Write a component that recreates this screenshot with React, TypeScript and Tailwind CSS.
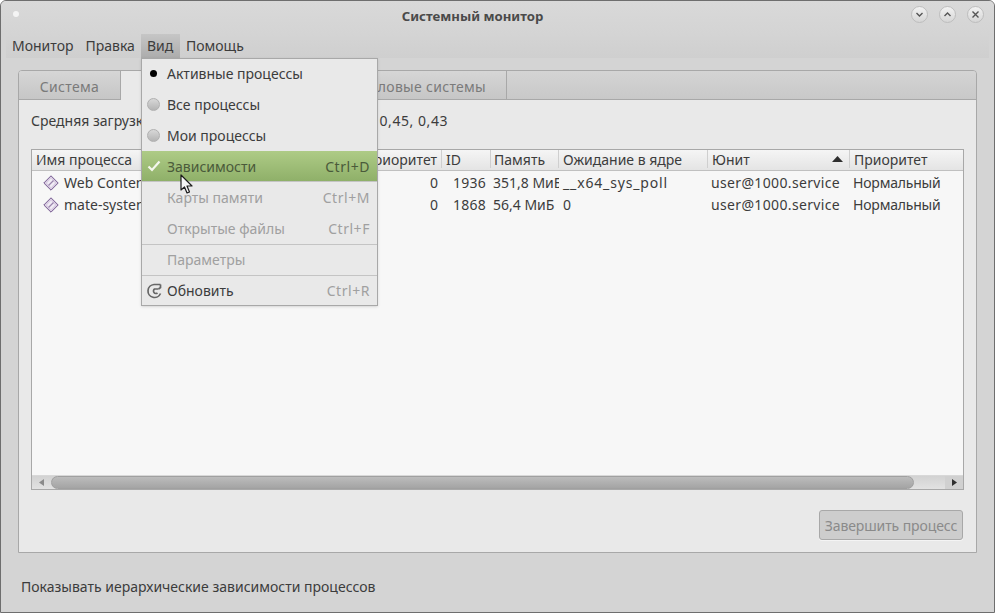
import React from "react";

const font = { fontFamily: '"Noto Sans", "Open Sans", sans-serif' };

function ProcIcon() {
  return (
    <svg width="16" height="16" viewBox="0 0 16 16" className="shrink-0">
      <path d="M8 0.8 L15.2 8 L8 15.2 L0.8 8 Z" fill="#d9cde2" stroke="#75598f" strokeWidth="1" />
      <path d="M4 8 L8 3.5 L12 8 L8 12.5 Z" fill="#f1ecf5" />
      <path d="M5.5 10.5 L10.5 5.5" stroke="#9a85ad" strokeWidth="1.3" />
    </svg>
  );
}

function WinButton({ kind }: { kind: "min" | "max" | "close" }) {
  return (
    <div className="w-[17px] h-[17px] rounded-full border border-[#bdbdbd] bg-gradient-to-b from-[#f2f2f2] to-[#d6d6d6] flex items-center justify-center">
      <svg width="9" height="9" viewBox="0 0 9 9" fill="none" stroke="#555" strokeWidth="1.4">
        {kind === "min" && <path d="M1.5 3 L4.5 6 L7.5 3" />}
        {kind === "max" && <path d="M1.5 6 L4.5 3 L7.5 6" />}
        {kind === "close" && <path d="M1.5 1.5 L7.5 7.5 M7.5 1.5 L1.5 7.5" />}
      </svg>
    </div>
  );
}

function Tab({ label, active, w }: { label: string; active?: boolean; w: string }) {
  return (
    <div
      className={`${w} h-full pt-[2px] flex items-center justify-center border-r border-[#a8a8a8] tracking-[0.3px] ${
        active ? "bg-[#e9e9e9] text-[#3c3c3c]" : "bg-gradient-to-b from-[#d6d6d6] to-[#c6c6c6] text-[#7a7a7a] border-b"
      }`}
    >
      {label}
    </div>
  );
}

const headers = [
  { label: "Имя процесса", w: "w-[329px]", pl: "pl-[4px]" },
  { label: "Приоритет", w: "w-[81px]", right: true, pl: "pl-[4px]" },
  { label: "ID", w: "w-[49px]", pl: "pl-[4px]" },
  { label: "Память", w: "w-[68px]", pl: "pl-[3px]" },
  { label: "Ожидание в ядре", w: "w-[149px]", pl: "pl-[4px]" },
  { label: "Юнит", w: "w-[142px]", sort: true, pl: "pl-[4px]" },
  { label: "Приоритет", w: "flex-1", pl: "pl-[4px]" },
];

const rows = [
  { name: "Web Content", nice: "0", id: "1936", mem: "351,8 МиБ", wait: "__x64_sys_poll", waitCls: "tracking-[0.85px]" },
  { name: "mate-system-monitor", nice: "0", id: "1868", mem: "56,4 МиБ", wait: "0", waitCls: "" },
];

function TableRow({ r }: { r: (typeof rows)[number] }) {
  return (
    <div className="h-[22px] pb-[1px] flex items-center text-[#3c3c3c] whitespace-nowrap">
      <div className="w-[329px] pl-[11px] flex items-center gap-[5px] overflow-hidden">
        <ProcIcon />
        <span>{r.name}</span>
      </div>
      <div className="w-[77px] text-right">{r.nice}</div>
      <div className="w-[48px] text-right tracking-[0.25px]">{r.id}</div>
      <div className="w-[73px] pl-[7px] overflow-hidden">{r.mem}</div>
      <div className={`w-[149px] pl-[4px] ${r.waitCls}`}>{r.wait}</div>
      <div className="w-[142px] pl-[3px] tracking-[0.35px]">user@1000.service</div>
      <div className="flex-1 pl-[3px] tracking-[-0.2px]">Нормальный</div>
    </div>
  );
}

function MenuItem({
  label,
  accel,
  mark,
  disabled,
  active,
  sep,
  h = "h-[31px]",
}: {
  label: string;
  accel?: string;
  mark?: React.ReactNode;
  disabled?: boolean;
  active?: boolean;
  sep?: boolean;
  h?: string;
}) {
  return (
    <div
      className={`${h} flex items-center pr-[7px] ${sep ? "border-t border-[#c4c4c4]" : ""} ${
        active ? "bg-gradient-to-b from-[#aecb86] to-[#8fb069] text-[#4a5a3a] border-b border-[#c4c4c4]" : ""
      } ${disabled ? "text-[#a0a0a0]" : active ? "" : "text-[#3c3c3c]"}`}
    >
      <div className="w-[23px] mr-[2px] flex justify-center shrink-0">{mark}</div>
      <span className="flex-1">{label}</span>
      {accel && (
        <span className={`tracking-[0.55px] ${active ? "text-[#4a5a3a]" : "text-[#a0a0a0]"}`}>{accel}</span>
      )}
    </div>
  );
}

const Radio = () => (
  <div className="w-[13px] h-[13px] rounded-full border border-[#b0b0b0] bg-gradient-to-b from-[#d8d8d8] to-[#b4b4b4]" />
);

export default function App() {
  return (
    <div
      style={font}
      className="relative w-[995px] h-[613px] overflow-hidden bg-[#d4d4d4] border border-[#6e6e6e] rounded-t-[6px] text-[14px] text-[#3c3c3c] flex flex-col"
    >
      {/* заголовок окна */}
      <div className="h-[33px] shrink-0 relative flex items-center justify-center pr-[50px] pb-[1px] bg-gradient-to-b from-[#d9d9d9] to-[#d4d4d4]">
        <div className="absolute left-[12px] top-[10px] w-[6px] h-[6px] rounded-full bg-[#f4f4f4]" />
        <span className="font-bold text-[13.2px] text-[#4a4a4a]">Системный монитор</span>
        <div className="absolute right-[10px] top-[5px] flex gap-[11px]">
          <WinButton kind="min" />
          <WinButton kind="max" />
          <WinButton kind="close" />
        </div>
      </div>

      {/* меню */}
      <div className="h-[24px] shrink-0 mx-[5px] flex items-stretch bg-gradient-to-b from-[#d4d4d4] to-[#cfcfcf]">
        <div className="px-[6px] pb-[2px] flex items-center">Монитор</div>
        <div className="px-[6px] pb-[2px] flex items-center">Правка</div>
        <div className="px-[6px] pb-[2px] w-[39px] flex items-center bg-gradient-to-b from-[#c6c6c6] to-[#acacac]">Вид</div>
        <div className="px-[6px] pb-[2px] flex items-center">Помощь</div>
      </div>

      {/* вкладки и содержимое */}
      <div className="mt-[12px] mx-[17px] h-[483px] shrink-0 flex flex-col border border-[#a8a8a8] rounded-t-[4px] overflow-hidden">
        <div className="h-[29px] shrink-0 flex bg-gradient-to-b from-[#d4d4d4] to-[#c8c8c8]">
          <Tab label="Система" w="w-[102px]" />
          <Tab label="Процессы" w="w-[110px]" active />
          <Tab label="Ресурсы" w="w-[92px]" />
          <Tab label="Файловые системы" w="w-[184px] pl-[6px]" />
          <div className="flex-1 border-b border-[#a8a8a8]" />
        </div>
        <div className="flex-1 min-h-0 bg-[#e9e9e9] px-[12px] flex flex-col">
          <div className="h-[41px] shrink-0 flex items-center whitespace-nowrap">
            Средняя загрузка за последние 1, 5, 15 минут:
            <span className="ml-[-4px] tracking-[0.55px]">0,45, 0,45, 0,43</span>
          </div>
          <div className="mt-[8px] h-[341px] shrink-0 flex flex-col border border-[#a8a8a8] bg-[#f7f7f7]">
            <div className="h-[21px] shrink-0 pb-[2px] flex bg-gradient-to-b from-[#f5f5f5] to-[#e4e4e4] border-b border-[#c0c0c0] whitespace-nowrap">
              {headers.map((h, i) => (
                <div
                  key={i}
                  className={`${h.w} ${h.pl} pr-[4px] flex items-center border-r border-[#cfcfcf] last:border-r-0 ${
                    h.right ? "justify-end" : "justify-between"
                  }`}
                >
                  <span>{h.label}</span>
                  {h.sort && (
                    <svg width="11" height="6" viewBox="0 0 11 6" className="mr-[2px]">
                      <path d="M0 6 L5.5 0 L11 6 Z" fill="#2f2f2f" />
                    </svg>
                  )}
                </div>
              ))}
            </div>
            <div className="flex-1 min-h-0 pt-[1px]">
              {rows.map((r) => (
                <TableRow key={r.id} r={r} />
              ))}
            </div>
            <div className="h-[14px] shrink-0 flex items-center bg-gradient-to-b from-[#d2d2d2] to-[#e2e2e2] border-t border-[#d8d8d8]">
              <div className="w-[19px] flex justify-center">
                <svg width="5" height="7" viewBox="0 0 5 7">
                  <path d="M5 0 L0 3.5 L5 7 Z" fill="#8a8a8a" />
                </svg>
              </div>
              <div className="w-[863px] h-[13px] rounded-full border border-[#a0a0a0] bg-gradient-to-b from-[#bcbcbc] to-[#a4a4a4]" />
              <div className="flex-1" />
              <div className="w-[18px] h-full flex items-center justify-center bg-[#d0d0d0]">
                <svg width="5" height="7" viewBox="0 0 5 7">
                  <path d="M0 0 L5 3.5 L0 7 Z" fill="#2f2f2f" />
                </svg>
              </div>
            </div>
          </div>
          <div className="mt-[20px] flex justify-end">
            <div className="w-[144px] h-[30px] mr-[1px] flex items-center justify-center rounded-[3px] border border-[#a8a8a8] bg-[#cdcdcd] text-[#8a8a8a] whitespace-nowrap tracking-[-0.1px] shadow-[0_1px_0_#f4f4f4]">
              Завершить процесс
            </div>
          </div>
        </div>
      </div>

      {/* строка состояния */}
      <div className="flex-1 flex items-center pl-[20px] pt-[8px]">Показывать иерархические зависимости процессов</div>

      {/* раскрытое меню "Вид" */}
      <div className="absolute left-[140px] top-[57px] w-[237px] border border-[#a8a8a8] bg-[#e9e9e9] shadow-sm">
        <MenuItem h="h-[30px] pb-[1px]" label="Активные процессы" mark={<div className="w-[7px] h-[7px] rounded-full bg-black" />} />
        <MenuItem label="Все процессы" mark={<Radio />} />
        <MenuItem label="Мои процессы" mark={<Radio />} />
        <MenuItem
          label="Зависимости"
          accel="Ctrl+D"
          active
          mark={
            <svg width="14" height="12" viewBox="0 0 14 12" fill="none" stroke="#f4f7ee" strokeWidth="2.2">
              <path d="M1.5 6.5 L5 10 L12.5 1.5" />
            </svg>
          }
        />
        <MenuItem label="Карты памяти" accel="Ctrl+M" disabled />
        <MenuItem label="Открытые файлы" accel="Ctrl+F" disabled />
        <MenuItem h="h-[31px] pb-[1px]" label="Параметры" disabled sep />
        <MenuItem
          h="h-[30px]"
          label="Обновить"
          accel="Ctrl+R"
          sep
          mark={
            <svg width="16" height="16" viewBox="0 0 16 16" fill="none" stroke="#666" strokeWidth="1.7">
              <path d="M14.5 1.5 H8 A6.5 6.5 0 1 0 14.5 10.5" />
              <path d="M12.5 6 H8.5 A2.5 2.5 0 1 0 11.5 10" />
              <path d="M14.5 1.5 V4.5 L12.5 6" />
            </svg>
          }
        />
      </div>

      {/* курсор */}
      <svg width="14" height="21" viewBox="0 0 14 21" className="absolute left-[179px] top-[173px]">
        <path
          d="M1 1 L1 16 L4.5 13 L7 19 L9.5 18 L7 12 L12 12 Z"
          fill="#f5f5f5"
          stroke="#1c1c1c"
          strokeWidth="1.2"
          strokeLinejoin="round"
        />
      </svg>
    </div>
  );
}
